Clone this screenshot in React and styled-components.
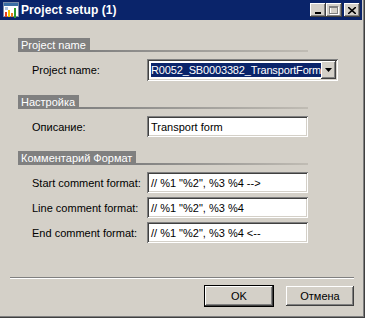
import React from 'react';
import styled, { createGlobalStyle } from 'styled-components';

const GlobalStyle = createGlobalStyle`
  html, body {
    margin: 0;
    padding: 0;
    background: #d4d0c8;
  }
  body {
    font-family: 'Liberation Sans', Arial, sans-serif;
    font-size: 11px;
    color: #000;
  }
`;

// классическая рамка Win2000
const raised = `
  box-shadow: inset -1px -1px #404040, inset 1px 1px #ffffff,
    inset -2px -2px #808080, inset 2px 2px #d4d0c8;
`;

const sunken = `
  box-shadow: inset 1px 1px #808080, inset -1px -1px #ffffff,
    inset 2px 2px #404040, inset -2px -2px #d4d0c8;
`;

const Window = styled.div`
  width: 365px;
  height: 318px;
  box-sizing: border-box;
  background: #d4d0c8;
  display: flex;
  flex-direction: column;
  padding: 0 3px 3px 0;
  box-shadow: inset -1px -1px #404040, inset -2px -2px #808080;
`;

const TitleBar = styled.div`
  height: 20px;
  background: #0a246a;
  display: flex;
  align-items: center;
  padding: 0 2px 0 3px;
  color: #fff;
  flex-shrink: 0;
`;

const TitleText = styled.span`
  font-weight: bold;
  font-size: 12px;
  margin-left: 2px;
  flex: 1;
  letter-spacing: 0.1px;
`;

const CaptionButton = styled.div`
  width: 16px;
  height: 14px;
  background: #d4d0c8;
  ${raised}
  display: flex;
  align-items: center;
  justify-content: center;
  margin-left: ${(p) => (p.$gap ? '2px' : '0')};
`;

const Body = styled.div`
  flex: 1;
  display: flex;
  flex-direction: column;
  padding: 18px 0 0 18px;
`;

const Section = styled.div`
  width: 290px;
  display: flex;
  flex-direction: column;
  gap: ${(p) => p.$gap || 4}px;
  margin-bottom: 14px;
`;

const SectionHeader = styled.div`
  display: flex;
  height: 14px;
  margin-bottom: 3px;
`;

const SectionLabel = styled.span`
  background: #808080;
  color: #fff;
  line-height: 14px;
  padding: 0 4px 0 3px;
  white-space: nowrap;
`;

const SectionLine = styled.div`
  flex: 1;
  align-self: flex-end;
  height: 2px;
  background: linear-gradient(to right, #808080, #c0bcb4);
`;

const Row = styled.div`
  display: flex;
  align-items: center;
  padding-left: 14px;
  height: ${(p) => p.$h || 21}px;
`;

const Label = styled.span`
  width: 115px;
  flex-shrink: 0;
  white-space: nowrap;
`;

const TextBox = styled.div`
  width: 162px;
  height: 100%;
  box-sizing: border-box;
  background: #fff;
  ${sunken}
  display: flex;
  align-items: center;
  padding: 0 4px;
  white-space: nowrap;
  overflow: hidden;
`;

const Combo = styled.div`
  width: 191px;
  height: 100%;
  box-sizing: border-box;
  background: #fff;
  ${sunken}
  display: flex;
  align-items: center;
  padding: 2px 2px 2px 4px;
  flex-shrink: 0;
`;

const Selected = styled.span`
  background: #0a246a;
  color: #fff;
  line-height: 14px;
  letter-spacing: -0.15px;
  white-space: nowrap;
`;

const DropButton = styled.div`
  width: 16px;
  height: 18px;
  background: #d4d0c8;
  ${raised}
  display: flex;
  align-items: center;
  justify-content: center;
  margin-left: auto;
`;

const Footer = styled.div`
  flex-shrink: 0;
  padding: 0 8px 8px 10px;
`;

const Separator = styled.div`
  height: 0;
  border-top: 1px solid #808080;
  border-bottom: 1px solid #fff;
  margin-bottom: 6px;
`;

const Buttons = styled.div`
  display: flex;
  justify-content: flex-end;
  align-items: center;
  gap: 12px;
`;

const Button = styled.div`
  width: ${(p) => (p.$default ? 70 : 68)}px;
  height: ${(p) => (p.$default ? 22 : 20)}px;
  box-sizing: border-box;
  background: #d4d0c8;
  display: flex;
  align-items: center;
  justify-content: center;
  ${(p) =>
    p.$default
      ? `border: 1px solid #000;
         box-shadow: inset -1px -1px #404040, inset 1px 1px #ffffff,
           inset -2px -2px #808080;`
      : raised}
`;

const AppIcon = () => (
  <svg width="16" height="16" viewBox="0 0 16 16">
    <rect x="0.5" y="0.5" width="15" height="14" fill="#fff" stroke="#7a8ca8" />
    <rect x="1" y="1" width="14" height="3" fill="#3a6ea5" />
    <rect x="2" y="5" width="3" height="3" fill="#b0c4de" />
    <rect x="2" y="10" width="2" height="5" fill="#e8401c" />
    <rect x="5" y="8" width="2" height="7" fill="#f5c400" />
    <rect x="8" y="11" width="2" height="4" fill="#e87a1c" />
    <rect x="11" y="6" width="2" height="10" fill="#2e9a2e" />
  </svg>
);

const fields = [
  { label: 'Start comment format:', value: '// %1 "%2", %3 %4 -->' },
  { label: 'Line comment format:', value: '// %1 "%2", %3 %4' },
  { label: 'End comment format:', value: '// %1 "%2", %3 %4 <--' },
];

const App = () => (
  <>
    <GlobalStyle />
    <Window>
      <TitleBar>
        <AppIcon />
        <TitleText>Project setup (1)</TitleText>
        <CaptionButton>
          <svg width="8" height="8" viewBox="0 0 8 8">
            <rect x="1" y="6" width="6" height="2" fill="#000" />
          </svg>
        </CaptionButton>
        <CaptionButton>
          <svg width="10" height="9" viewBox="0 0 10 9">
            <rect x="1.5" y="1.5" width="8" height="7" fill="none" stroke="#fff" />
            <rect x="0.5" y="0.5" width="8" height="7" fill="none" stroke="#808080" />
            <rect x="1" y="1" width="7" height="1" fill="#808080" />
          </svg>
        </CaptionButton>
        <CaptionButton $gap>
          <svg width="8" height="7" viewBox="0 0 8 7">
            <path d="M0 0 L8 7 M8 0 L0 7" stroke="#000" strokeWidth="1.6" />
          </svg>
        </CaptionButton>
      </TitleBar>

      <Body>
        <Section>
          <SectionHeader>
            <SectionLabel>Project name</SectionLabel>
            <SectionLine />
          </SectionHeader>
          <Row $h={22}>
            <Label>Project name:</Label>
            <Combo>
              <Selected>R0052_SB0003382_TransportForm</Selected>
              <DropButton>
                <svg width="7" height="4" viewBox="0 0 7 4">
                  <path d="M0 0 H7 L3.5 4 Z" fill="#000" />
                </svg>
              </DropButton>
            </Combo>
          </Row>
        </Section>

        <Section>
          <SectionHeader>
            <SectionLabel>Настройка</SectionLabel>
            <SectionLine />
          </SectionHeader>
          <Row>
            <Label>Описание:</Label>
            <TextBox>Transport form</TextBox>
          </Row>
        </Section>

        <Section>
          <SectionHeader>
            <SectionLabel>Комментарий Формат</SectionLabel>
            <SectionLine />
          </SectionHeader>
          {fields.map((f) => (
            <Row key={f.label}>
              <Label>{f.label}</Label>
              <TextBox>{f.value}</TextBox>
            </Row>
          ))}
        </Section>
      </Body>

      <Footer>
        <Separator />
        <Buttons>
          <Button $default>OK</Button>
          <Button>Отмена</Button>
        </Buttons>
      </Footer>
    </Window>
  </>
);

export default App;
